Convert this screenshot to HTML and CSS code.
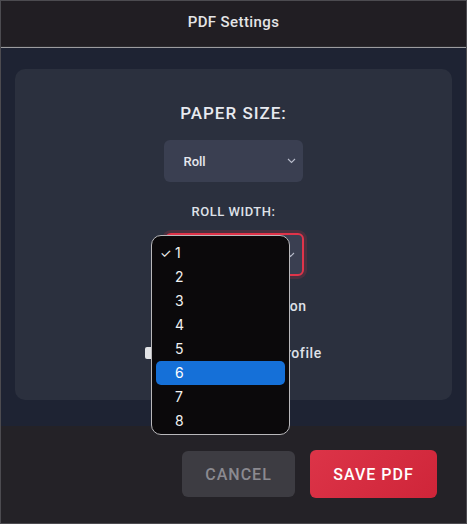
FILE: index.html
```html
<!DOCTYPE html>
<html>
<head>
<meta charset="utf-8">
<link rel="stylesheet" href="styles.css">
</head>
<body>
<div class="window">
  <div class="header">PDF Settings</div>
  <div class="main">
    <div class="card">
      <div class="title">PAPER SIZE:</div>
      <div class="select">
        <span>Roll</span>
        <svg class="chev" width="9" height="6" viewBox="0 0 9 6"><path d="M1 1 L4.5 4.5 L8 1" fill="none" stroke="#b8bccb" stroke-width="1.1"/></svg>
      </div>
      <div class="subtitle">ROLL WIDTH:</div>
      <div class="select active">
        <span>1</span>
        <svg class="chev" width="9" height="6" viewBox="0 0 9 6"><path d="M1 1 L4.5 4.5 L8 1" fill="none" stroke="#b8bccb" stroke-width="1.1"/></svg>
      </div>
      <label class="check first"><span class="box"></span><span>Print Each Section</span></label>
      <label class="check second"><span class="box"></span><span>Save as Default Profile</span></label>
    </div>
  </div>
  <div class="footer">
    <button class="btn cancel">CANCEL</button>
    <button class="btn save">SAVE PDF</button>
  </div>
  <ul class="menu">
    <li><span class="tick">✓</span>1</li>
    <li>2</li>
    <li>3</li>
    <li>4</li>
    <li>5</li>
    <li class="hl">6</li>
    <li>7</li>
    <li>8</li>
  </ul>
</div>
</body>
</html>
```

FILE: styles.css
```css
html, body {
  margin: 0;
  padding: 0;
  background: #242227;
}
.window {
  position: relative;
  width: 467px;
  height: 524px;
  box-sizing: border-box;
  border: 1px solid #4c4b50;
  display: flex;
  flex-direction: column;
  font-family: Roboto, "Liberation Sans", sans-serif;
  overflow: hidden;
}
.header {
  height: 46px;
  box-sizing: border-box;
  padding-bottom: 4px;
  background: #211e23;
  border-bottom: 1px solid #2b2a2e;
  color: #e4e4e6;
  font-size: 15px;
  font-weight: 500;
  display: flex;
  align-items: center;
  justify-content: center;
  letter-spacing: 0.4px;
  box-shadow: 0 1px 0 #9c9c9f;
}
.main {
  height: 378px;
  margin-top: 1px;
  background: #1e2333;
  padding: 21px 14px 0;
  box-sizing: border-box;
}
.card {
  height: 331px;
  background: #2b303e;
  border-radius: 10px;
  display: flex;
  flex-direction: column;
  align-items: center;
}
.title {
  margin-top: 34px;
  font-size: 17px;
  font-weight: 500;
  letter-spacing: 1px;
  color: #e8eaf0;
  line-height: 20px;
}
.select {
  margin-top: 17px;
  width: 139px;
  height: 42px;
  box-sizing: border-box;
  background: #3a3f51;
  border-radius: 6px;
  display: flex;
  align-items: center;
  justify-content: space-between;
  padding: 0 7px 0 20px;
  color: #e6e8ee;
  font-size: 13px;
  font-weight: 500;
  margin-left: -1px;
}
.chev { display: block; }
.subtitle {
  margin-top: 22px;
  font-size: 13px;
  font-weight: 500;
  letter-spacing: 0.5px;
  color: #dfe1e8;
  line-height: 16px;
}
.select.active {
  margin-top: 13px;
  height: 43px;
  margin-left: 1px;
  border: 2px solid #e0344a;
  box-shadow: 0 0 0 3px rgba(224, 52, 74, 0.18);
}
.check {
  display: flex;
  align-items: center;
  gap: 9px;
  color: #dfe1e8;
  font-size: 14px;
  font-weight: 500;
  letter-spacing: 0.6px;
  line-height: 16px;
}
.check.first { margin-top: 22px; }
.check.second { margin-top: 31px; }
.box {
  width: 12px;
  height: 12px;
  background: #e2e3e6;
  border-radius: 2px;
}
.footer {
  flex: 1;
  background: #242227;
  display: flex;
  justify-content: flex-end;
  align-items: flex-start;
  gap: 15px;
  padding: 24px 29px 0 0;
}
.btn {
  border: none;
  border-radius: 6px;
  font-family: Roboto, "Liberation Sans", sans-serif;
  font-size: 16px;
  font-weight: 500;
  letter-spacing: 1px;
  cursor: pointer;
}
.cancel {
  margin-top: 1px;
  width: 113px;
  height: 46px;
  background: #3d3c42;
  color: #8b8a90;
}
.save {
  width: 127px;
  height: 48px;
  background: linear-gradient(135deg, #dc3448, #cf2539);
  color: #ffffff;
}
.menu {
  position: absolute;
  left: 150px;
  top: 234px;
  width: 139px;
  height: 200px;
  box-sizing: border-box;
  margin: 0;
  padding: 5px 4px;
  list-style: none;
  background: #0b090b;
  border: 1px solid #b9b8bb;
  border-radius: 10px;
  font-family: Inter, "Noto Sans", sans-serif;
  font-size: 14px;
  color: #f2f2f2;
}
.menu li {
  height: 24px;
  line-height: 24px;
  padding-left: 19px;
  position: relative;
  border-radius: 5px;
}
.menu li.hl {
  background: #1570d8;
  color: #fff;
}
.tick {
  position: absolute;
  left: 4px;
  top: 0;
  font-size: 13px;
}
```
